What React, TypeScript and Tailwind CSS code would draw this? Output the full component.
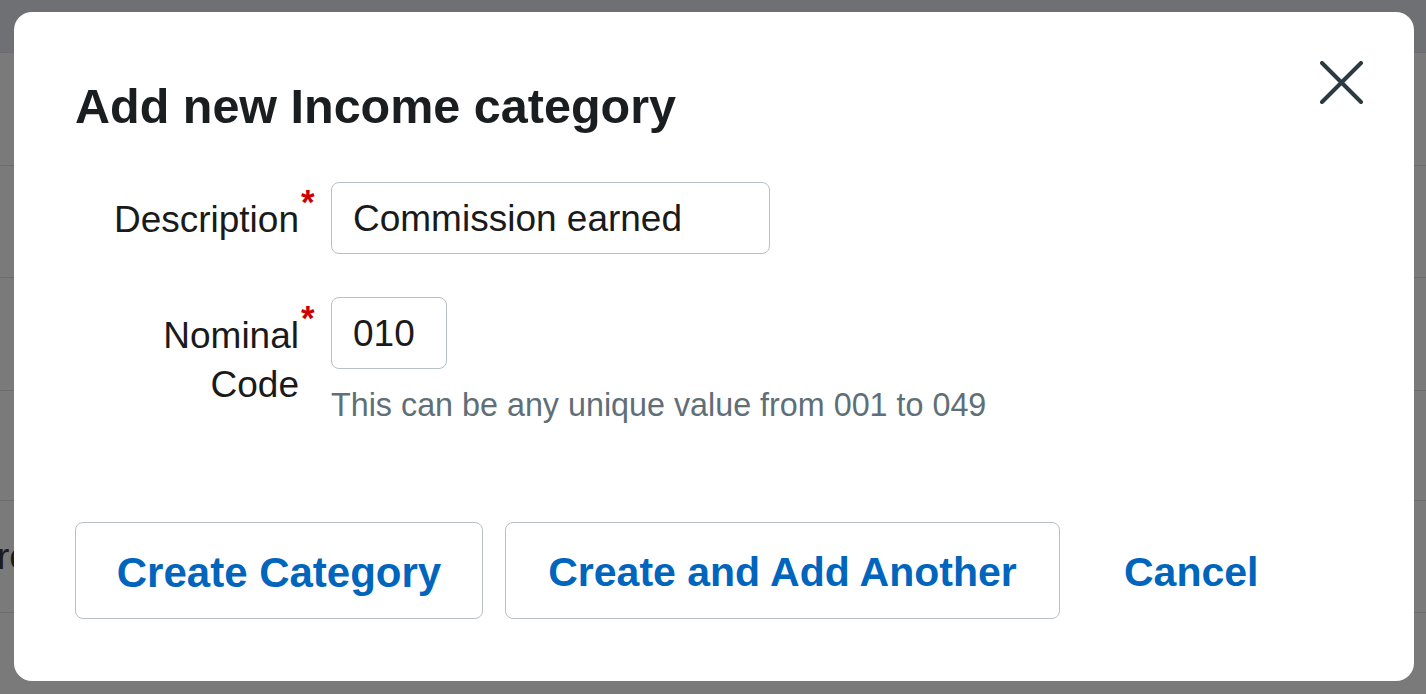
import React from "react"

const font = { fontFamily: '"Liberation Sans", Arial, sans-serif' }

function Asterisk() {
  return (
    <span className="absolute left-full top-[-11px] ml-[2px] text-[35px] leading-none font-bold text-[#cc0000]">
      *
    </span>
  )
}

function CloseIcon() {
  return (
    <svg width="43" height="43" viewBox="0 0 43 43" fill="none">
      <path d="M2 2L41 41M41 2L2 41" stroke="#2b3a42" strokeWidth="4" strokeLinecap="round" />
    </svg>
  )
}

export default function App() {
  const rows = [113, 112, 113, 110, 112]

  return (
    <div className="relative h-[694px] w-full overflow-hidden bg-[#7a7a7a]" style={font}>
      {/* dimmed page behind the dialog */}
      <div className="h-[52px] bg-[#6f7073]" />
      {rows.map((h, i) => (
        <div
          key={i}
          className="flex items-center border-t border-[#6c6c6c]"
          style={{ height: h }}
        >
          {i === 4 && <span className="-ml-[3px] text-[37px] text-[#1c1c1c]">re</span>}
        </div>
      ))}
      <div className="border-t border-[#6c6c6c]" />

      {/* dialog */}
      <div className="absolute left-[14px] top-[12px] h-[669px] w-[1400px] rounded-[18px] bg-white pl-[61px] pt-[66px]">
        <button className="absolute right-[51px] top-[49px]">
          <CloseIcon />
        </button>

        <h2 className="text-[48.5px] font-bold leading-[56px] text-[#1a1e20]">Add new Income category</h2>

        <div className="mt-[48px] flex items-start">
          <div className="relative w-[224px] shrink-0 pt-[13px] text-right">
            <div className="relative inline-block text-[37px] leading-[49px] text-[#1a1a1a]">
              Description
              <Asterisk />
            </div>
          </div>
          <div className="ml-[32px] flex h-[72px] w-[439px] items-center rounded-[8px] border border-[#b7c0c5] pl-[21px] pt-[2px] text-[37px] text-[#1a1a1a]">
            Commission earned
          </div>
        </div>

        <div className="mt-[43px] flex items-start">
          <div className="w-[224px] shrink-0 pt-[14px] text-right text-[37px] leading-[49px] text-[#1a1a1a]">
            <span className="relative inline-block">
              Nominal
              <Asterisk />
            </span>
            <br />
            Code
          </div>
          <div className="ml-[32px] flex flex-col">
            <div className="flex h-[72px] w-[116px] items-center rounded-[8px] border border-[#b7c0c5] pl-[21px] pt-[2px] text-[37px] text-[#1a1a1a]">
              010
            </div>
            <p className="mt-[16px] text-[32.3px] leading-[40px] text-[#5f6f78]">
              This can be any unique value from 001 to 049
            </p>
          </div>
        </div>

        <div className="mt-[97px] flex items-center gap-[22px]">
          <button className="h-[97px] w-[408px] rounded-[8px] border border-[#b7c0c5] pt-[4px] text-[42px] font-bold text-[#0065bd]">
            Create Category
          </button>
          <button className="h-[97px] w-[555px] rounded-[8px] border border-[#b7c0c5] pt-[4px] text-[41px] font-bold text-[#0065bd]">
            Create and Add Another
          </button>
          <button className="h-[97px] px-[42px] pt-[4px] text-[41px] font-bold text-[#0065bd]">Cancel</button>
        </div>
      </div>
    </div>
  )
}
